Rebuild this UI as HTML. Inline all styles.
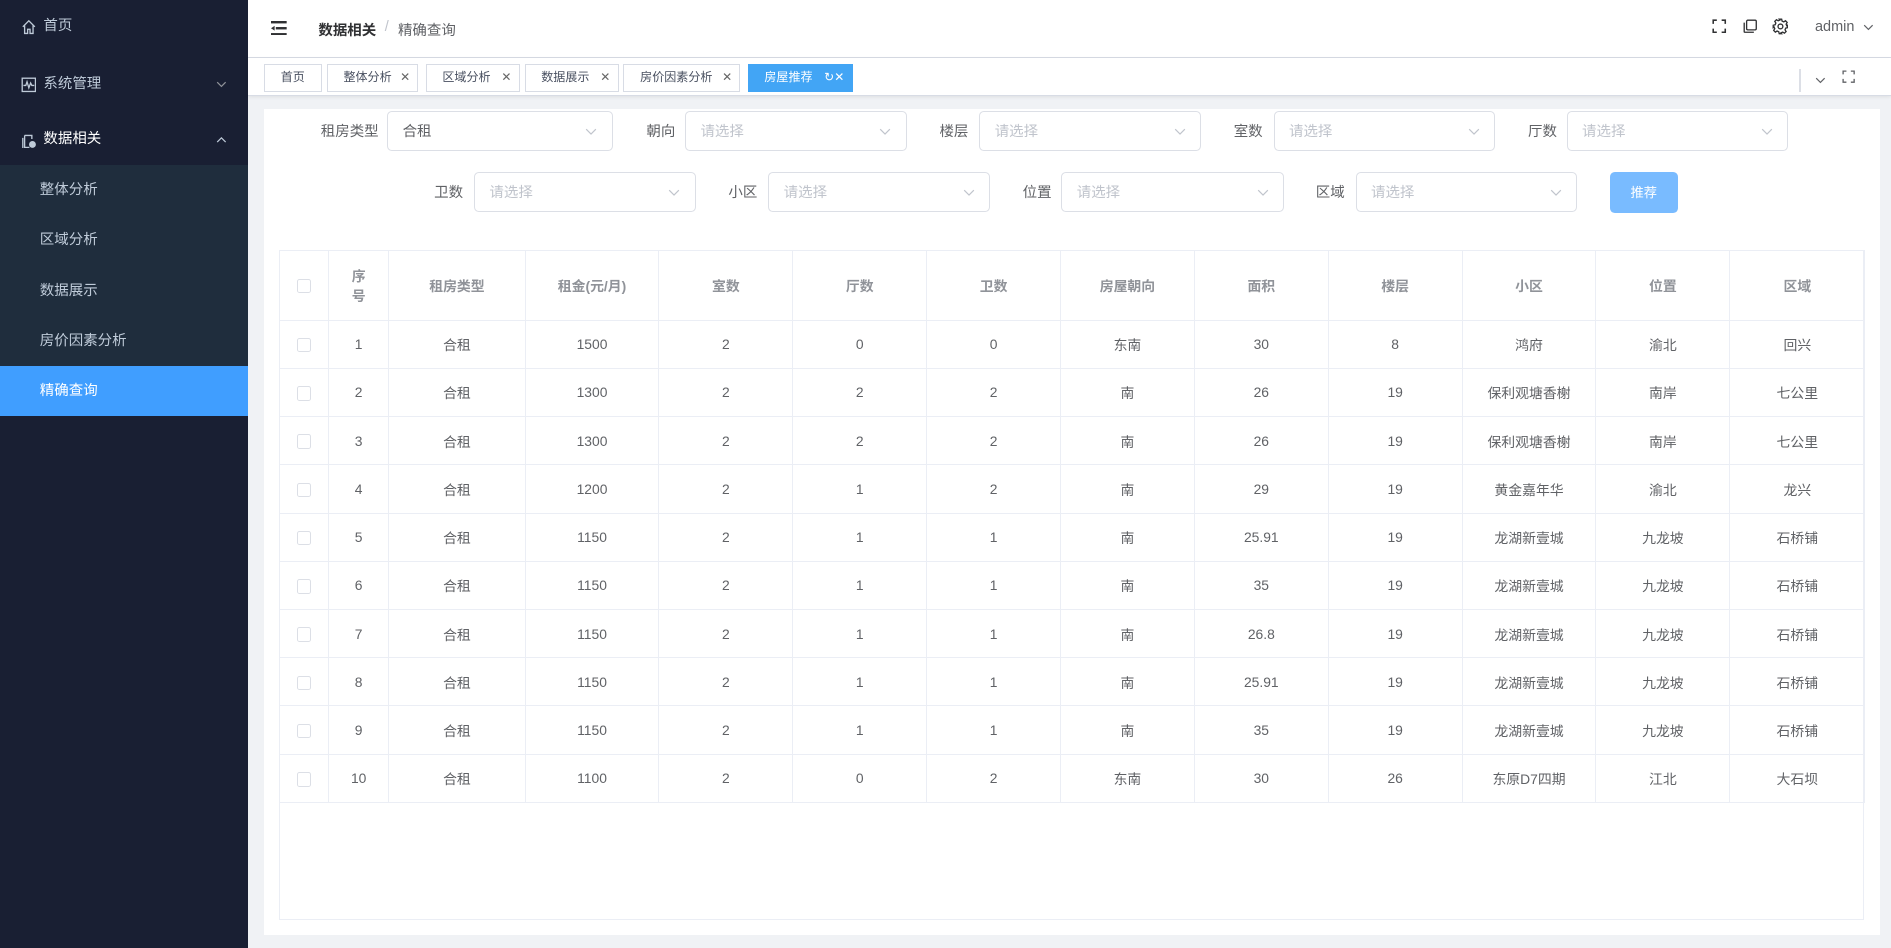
<!DOCTYPE html>
<html><head><meta charset="utf-8">
<style>
*{box-sizing:border-box;margin:0;padding:0}
html,body{width:1891px;height:948px;overflow:hidden;background:#f0f2f5}
body{font-family:"Liberation Sans","Noto Sans CJK SC",sans-serif;}
#w{zoom:1.20599;width:1568px;height:786px;position:relative;overflow:hidden;background:#f0f2f5}
.a{position:absolute}
#sb{left:0;top:0;width:206px;height:786px;background:#191f33}
.mi{position:absolute;left:0;width:206px;height:46px;line-height:46px;color:#bfcbd9;font-size:12px}
.mi .t{position:absolute;left:36px}
.mi svg{position:absolute;left:17px;top:17px}
.mi svg.arr{left:179px;top:20px}
#sub{left:0;top:137px;width:206px;height:208px;background:#1f2d3d}
.si{position:absolute;left:0;width:206px;height:41.6px;line-height:41.6px;padding-left:33px;font-size:12px;color:#bfcbd9}
.si.on{background:#409eff;color:#fff}
#hd{left:206px;top:0;width:1362px;height:48px;background:#fff;border-bottom:1px solid #d8dce5}
#tg{left:206px;top:48px;width:1362px;height:32px;background:#fff;border-bottom:1px solid #d8dce5;box-shadow:0 1px 3px rgba(0,0,0,.08)}
.tag{position:absolute;top:5px;height:23px;line-height:21px;border:1px solid #d8dce5;font-size:10px;color:#495060;background:#fff;padding-left:13px}
.tag .x{position:absolute;right:6px;top:0;font-size:10px;color:#666}
.tag.on{background:#42a5f5;border-color:#42a5f5;color:#fff}
.tag.on .x{color:#fff}
#card{left:219px;top:90px;width:1340px;height:685px;background:#fff}
.lb{position:absolute;font-size:12px;color:#606266;height:33px;line-height:35px;text-align:right}
.sel{position:absolute;height:33px;border:1px solid #dcdfe6;border-radius:4px;font-size:12px;color:#c0c4cc;line-height:34px;padding-left:12px;background:#fff}
.sel.v{color:#606266}
.sel svg{position:absolute;right:12px;top:13px}
#btn{left:1335px;top:143px;width:56px;height:34px;background:#79bbff;border-radius:4px;color:#fff;font-size:11px;line-height:34px;text-align:center}
table{position:absolute;left:231px;top:207px;width:1315px;border-collapse:collapse;table-layout:fixed}
td,th{border:1px solid #ebeef5;text-align:center;font-size:11.5px;color:#606266;height:40px;font-weight:normal}
th{height:58px;color:#909399;font-weight:bold;font-size:11.5px}
.cb{display:inline-block;width:12px;height:12px;border:1px solid #dcdfe6;border-radius:2px;background:#fff;vertical-align:middle}
#tb{left:231px;top:207px;width:1315px;height:556px;border:1px solid #ebeef5}
</style></head><body><div id="w">
<div id="sb" class="a">
 <div class="mi" style="top:-1px"><svg width="13" height="13" viewBox="0 0 13 13" fill="none" stroke="#bfcbd9" stroke-width="1.1"><path d="M1.5 6.5L6.5 1.5L11.5 6.5M3 5v7h2.5V8.5h2V12H10V5"/></svg><span class="t">首页</span></div>
 <div class="mi" style="top:47px"><svg width="13" height="13" viewBox="0 0 13 13" fill="none" stroke="#bfcbd9" stroke-width="1.1"><rect x="1" y="1" width="11" height="11"/><path d="M2 7h2l1-3 1.5 5 1.5-4 1 2h2"/></svg><span class="t">系统管理</span><svg class="arr" width="9" height="6" viewBox="0 0 9 6" fill="none" stroke="#909399"><path d="M1 1l3.5 3.5L8 1"/></svg></div>
 <div class="mi" style="top:93px;color:#fff"><svg width="13" height="13" viewBox="0 0 13 13" fill="none" stroke="#bfcbd9" stroke-width="1.1"><path d="M3 2h6v3M3 2v10h4M1.5 4v8.5"/><circle cx="9.5" cy="9.5" r="2.3" fill="#bfcbd9"/></svg><span class="t">数据相关</span><svg class="arr" width="9" height="6" viewBox="0 0 9 6" fill="none" stroke="#bfcbd9"><path d="M1 5l3.5-3.5L8 5"/></svg></div>
</div>
<div id="sub" class="a">
 <div class="si" style="top:0">整体分析</div>
 <div class="si" style="top:41.6px">区域分析</div>
 <div class="si" style="top:83.2px">数据展示</div>
 <div class="si" style="top:124.8px">房价因素分析</div>
 <div class="si on" style="top:166.4px">精确查询</div>
</div>
<div id="hd" class="a">
 <svg class="a" style="left:19px;top:17px" width="13" height="12" viewBox="0 0 13 12"><rect x="0" y="0" width="13" height="2" fill="#303133"/><rect x="4" y="5" width="9" height="2" fill="#303133"/><rect x="0" y="10" width="13" height="2" fill="#303133"/><path d="M0 6l3-2v4z" fill="#303133"/></svg>
 <div class="a" style="left:58px;top:16px;font-size:12px;color:#303133;font-weight:bold">数据相关</div>
 <div class="a" style="left:113px;top:16px;font-size:12px;color:#c0c4cc">/</div>
 <div class="a" style="left:124px;top:16px;font-size:12px;color:#606266">精确查询</div>
 <svg class="a" style="left:1214px;top:16px" width="12" height="12" viewBox="0 0 12 12" fill="none" stroke="#303133" stroke-width="1.3"><path d="M1 4V1h3M8 1h3v3M11 8v3H8M4 11H1V8"/></svg>
 <svg class="a" style="left:1239px;top:16px" width="12" height="12" viewBox="0 0 12 12" fill="none" stroke="#303133" stroke-width="1.1"><rect x="3" y="1" width="8" height="8" rx="1"/><path d="M1 3v7.5a.5.5 0 0 0 .5.5H9"/></svg>
 <svg class="a" style="left:1263px;top:15px" width="14" height="14" viewBox="0 0 14 14" fill="none" stroke="#303133" stroke-width="1.1"><circle cx="7" cy="7" r="2"/><path d="M6 1h2l.4 1.6 1.4.6 1.4-.9 1.4 1.4-.9 1.4.6 1.4L13 6v2l-1.6.4-.6 1.4.9 1.4-1.4 1.4-1.4-.9-1.4.6L8 13H6l-.4-1.6-1.4-.6-1.4.9-1.4-1.4.9-1.4-.6-1.4L1 8V6l1.6-.4.6-1.4-.9-1.4 1.4-1.4 1.4.9 1.4-.6z"/></svg>
 <div class="a" style="left:1299px;top:16px;font-size:12px;color:#606266">admin</div>
 <svg class="a" style="left:1339px;top:20px" width="9" height="6" viewBox="0 0 9 6" fill="none" stroke="#606266"><path d="M1 1l3.5 3.5L8 1"/></svg>
</div>
<div id="tg" class="a">
 <div class="tag" style="left:13px;width:48px">首页</div>
 <div class="tag" style="left:65px;width:76px">整体分析<span class="x">✕</span></div>
 <div class="tag" style="left:147px;width:78px">区域分析<span class="x">✕</span></div>
 <div class="tag" style="left:229px;width:78px">数据展示<span class="x">✕</span></div>
 <div class="tag" style="left:311px;width:97px">房价因素分析<span class="x">✕</span></div>
 <div class="tag on" style="left:414px;width:87px">房屋推荐<span class="x">↻✕</span></div>
 <div class="a" style="left:1286px;top:9px;width:1px;height:19px;background:#dcdfe6"></div>
 <svg class="a" style="left:1299px;top:16px" width="9" height="6" viewBox="0 0 9 6" fill="none" stroke="#606266"><path d="M1 1l3.5 3.5L8 1"/></svg>
 <svg class="a" style="left:1321px;top:10px" width="11" height="11" viewBox="0 0 12 12" fill="none" stroke="#606266" stroke-width="1.2"><path d="M1 4V1h3M8 1h3v3M11 8v3H8M4 11H1V8"/></svg>
</div>
<div id="card" class="a"></div>

<div class="lb" style="left:250px;top:92px;width:64px">租房类型</div>
<div class="sel v" style="left:321px;top:92px;width:187px">合租<svg width="10" height="6" viewBox="0 0 10 6" fill="none" stroke="#c0c4cc"><path d="M1 1l4 4 4-4"/></svg></div>
<div class="lb" style="left:520px;top:92px;width:40px">朝向</div>
<div class="sel" style="left:568px;top:92px;width:184px">请选择<svg width="10" height="6" viewBox="0 0 10 6" fill="none" stroke="#c0c4cc"><path d="M1 1l4 4 4-4"/></svg></div>
<div class="lb" style="left:763px;top:92px;width:40px">楼层</div>
<div class="sel" style="left:812px;top:92px;width:184px">请选择<svg width="10" height="6" viewBox="0 0 10 6" fill="none" stroke="#c0c4cc"><path d="M1 1l4 4 4-4"/></svg></div>
<div class="lb" style="left:1007px;top:92px;width:40px">室数</div>
<div class="sel" style="left:1056px;top:92px;width:184px">请选择<svg width="10" height="6" viewBox="0 0 10 6" fill="none" stroke="#c0c4cc"><path d="M1 1l4 4 4-4"/></svg></div>
<div class="lb" style="left:1251px;top:92px;width:40px">厅数</div>
<div class="sel" style="left:1299px;top:92px;width:184px">请选择<svg width="10" height="6" viewBox="0 0 10 6" fill="none" stroke="#c0c4cc"><path d="M1 1l4 4 4-4"/></svg></div>

<div class="lb" style="left:344px;top:143px;width:40px">卫数</div>
<div class="sel" style="left:393px;top:143px;width:184px">请选择<svg width="10" height="6" viewBox="0 0 10 6" fill="none" stroke="#c0c4cc"><path d="M1 1l4 4 4-4"/></svg></div>
<div class="lb" style="left:588px;top:143px;width:40px">小区</div>
<div class="sel" style="left:637px;top:143px;width:184px">请选择<svg width="10" height="6" viewBox="0 0 10 6" fill="none" stroke="#c0c4cc"><path d="M1 1l4 4 4-4"/></svg></div>
<div class="lb" style="left:832px;top:143px;width:40px">位置</div>
<div class="sel" style="left:880px;top:143px;width:185px">请选择<svg width="10" height="6" viewBox="0 0 10 6" fill="none" stroke="#c0c4cc"><path d="M1 1l4 4 4-4"/></svg></div>
<div class="lb" style="left:1075px;top:143px;width:40px">区域</div>
<div class="sel" style="left:1124px;top:143px;width:184px">请选择<svg width="10" height="6" viewBox="0 0 10 6" fill="none" stroke="#c0c4cc"><path d="M1 1l4 4 4-4"/></svg></div>
<div id="btn" class="a">推荐</div>

<div id="tb" class="a"></div>
<table>
<colgroup><col style="width:41px"><col style="width:50px"><col style="width:113px"><col style="width:111px"><col style="width:111px"><col style="width:111px"><col style="width:111px"><col style="width:111px"><col style="width:111px"><col style="width:111px"><col style="width:111px"><col style="width:111px"><col style="width:112px"></colgroup>
<tr><th><span class="cb"></span></th><th>序<br>号</th><th>租房类型</th><th>租金(元/月)</th><th>室数</th><th>厅数</th><th>卫数</th><th>房屋朝向</th><th>面积</th><th>楼层</th><th>小区</th><th>位置</th><th>区域</th></tr>
<tr><td><span class="cb"></span></td><td>1</td><td>合租</td><td>1500</td><td>2</td><td>0</td><td>0</td><td>东南</td><td>30</td><td>8</td><td>鸿府</td><td>渝北</td><td>回兴</td></tr>
<tr><td><span class="cb"></span></td><td>2</td><td>合租</td><td>1300</td><td>2</td><td>2</td><td>2</td><td>南</td><td>26</td><td>19</td><td>保利观塘香榭</td><td>南岸</td><td>七公里</td></tr>
<tr><td><span class="cb"></span></td><td>3</td><td>合租</td><td>1300</td><td>2</td><td>2</td><td>2</td><td>南</td><td>26</td><td>19</td><td>保利观塘香榭</td><td>南岸</td><td>七公里</td></tr>
<tr><td><span class="cb"></span></td><td>4</td><td>合租</td><td>1200</td><td>2</td><td>1</td><td>2</td><td>南</td><td>29</td><td>19</td><td>黄金嘉年华</td><td>渝北</td><td>龙兴</td></tr>
<tr><td><span class="cb"></span></td><td>5</td><td>合租</td><td>1150</td><td>2</td><td>1</td><td>1</td><td>南</td><td>25.91</td><td>19</td><td>龙湖新壹城</td><td>九龙坡</td><td>石桥铺</td></tr>
<tr><td><span class="cb"></span></td><td>6</td><td>合租</td><td>1150</td><td>2</td><td>1</td><td>1</td><td>南</td><td>35</td><td>19</td><td>龙湖新壹城</td><td>九龙坡</td><td>石桥铺</td></tr>
<tr><td><span class="cb"></span></td><td>7</td><td>合租</td><td>1150</td><td>2</td><td>1</td><td>1</td><td>南</td><td>26.8</td><td>19</td><td>龙湖新壹城</td><td>九龙坡</td><td>石桥铺</td></tr>
<tr><td><span class="cb"></span></td><td>8</td><td>合租</td><td>1150</td><td>2</td><td>1</td><td>1</td><td>南</td><td>25.91</td><td>19</td><td>龙湖新壹城</td><td>九龙坡</td><td>石桥铺</td></tr>
<tr><td><span class="cb"></span></td><td>9</td><td>合租</td><td>1150</td><td>2</td><td>1</td><td>1</td><td>南</td><td>35</td><td>19</td><td>龙湖新壹城</td><td>九龙坡</td><td>石桥铺</td></tr>
<tr><td><span class="cb"></span></td><td>10</td><td>合租</td><td>1100</td><td>2</td><td>0</td><td>2</td><td>东南</td><td>30</td><td>26</td><td>东原D7四期</td><td>江北</td><td>大石坝</td></tr>
</table>
</div></body></html>
